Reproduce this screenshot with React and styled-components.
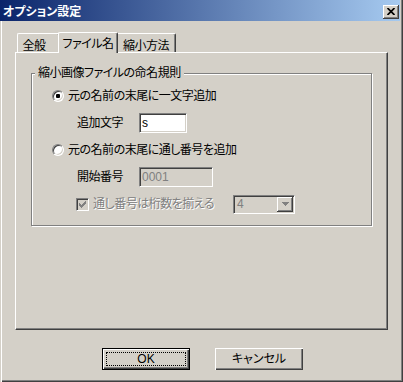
import styled, { createGlobalStyle } from "styled-components";

const GlobalStyle = createGlobalStyle`
  html, body {
    margin: 0;
    padding: 0;
    background: #d4d0c8;
  }
  body {
    font-family: "Liberation Sans", "Noto Sans CJK JP", sans-serif;
    font-size: 12px;
    font-feature-settings: "palt";
    letter-spacing: -0.5px;
    color: #000;
  }
`;

const Window = styled.div`
  width: 403px;
  height: 382px;
  box-sizing: border-box;
  display: flex;
  flex-direction: column;
  background: #d4d0c8;
  box-shadow: inset 1px 0 #d4d0c8, inset 2px 0 #fff, inset -1px -1px #404040,
    inset -2px -2px #808080;
`;

const TitleBar = styled.div`
  height: 21px;
  margin-right: 3px;
  box-sizing: border-box;
  padding: 5px 1px 0 3px;
  display: flex;
  align-items: flex-start;
  justify-content: space-between;
  background: linear-gradient(to right, #0a246a, #a6caf0);
`;

const Title = styled.span`
  color: #fff;
  font-weight: bold;
  line-height: 14px;
  letter-spacing: 0;
`;

const CloseButton = styled.div`
  width: 16px;
  height: 14px;
  box-sizing: border-box;
  display: flex;
  align-items: center;
  justify-content: center;
  background: #d4d0c8;
  box-shadow: inset -1px -1px #404040, inset 1px 1px #fff, inset -2px -2px #808080;
  svg {
    margin-top: -1px;
  }
`;

const Body = styled.div`
  flex: 1;
  padding: 11px 15px 0;
  display: flex;
  flex-direction: column;
`;

const TabStrip = styled.div`
  display: flex;
  align-items: flex-end;
  height: 20px;
  padding-left: 2px;
  position: relative;
  z-index: 1;
`;

const Tab = styled.div`
  width: ${(p) => p.$w}px;
  height: ${(p) => (p.$active ? 21 : 19)}px;
  margin: 0 ${(p) => (p.$active ? -2 : 0)}px ${(p) => (p.$active ? -1 : 0)}px;
  padding: ${(p) => (p.$active ? 4 : 5)}px ${(p) => p.$pr || 0}px 0 0;
  box-sizing: border-box;
  position: relative;
  z-index: ${(p) => (p.$active ? 2 : 1)};
  display: flex;
  justify-content: center;
  align-items: flex-start;
  line-height: 14px;
  white-space: nowrap;
  background: #d4d0c8;
  border-top: 1px solid #fff;
  border-left: 1px solid #fff;
  border-right: 1px solid #404040;
  border-radius: 2px 2px 0 0;
  box-shadow: inset -1px 0 #808080;
`;

const Panel = styled.div`
  height: 278px;
  box-sizing: border-box;
  border-top: 1px solid #fff;
  border-left: 1px solid #fff;
  border-right: 1px solid #404040;
  border-bottom: 1px solid #404040;
  box-shadow: inset -1px -1px #808080;
  display: flex;
  flex-direction: column;
`;

const Group = styled.fieldset`
  margin: 13px 15px 0 15px;
  padding: 6px 0 11px 3px;
  min-width: 0;
  border: 1px solid #808080;
  box-shadow: 1px 1px 0 #fff, inset 1px 1px 0 #fff;
`;

const Legend = styled.legend`
  padding: 0 3px;
  margin: 0;
  line-height: 14px;
  background: #d4d0c8;
`;

const Row = styled.div`
  display: flex;
  align-items: center;
  height: 20px;
  padding-left: ${(p) => p.$indent}px;
  margin-bottom: ${(p) => (p.$last ? 0 : 7)}px;
  line-height: 14px;
  white-space: nowrap;
`;

const Radio = styled.span`
  position: relative;
  width: 12px;
  height: 12px;
  box-sizing: border-box;
  border-radius: 50%;
  background: #fff;
  border: 1px solid;
  border-color: #808080 #fff #fff #808080;
  box-shadow: inset 1px 1px #404040, inset -1px -1px #d4d0c8;
  margin-right: 4px;
  flex: none;

  &::after {
    content: "";
    display: ${(p) => (p.$checked ? "block" : "none")};
    position: absolute;
    left: 3px;
    top: 3px;
    width: 4px;
    height: 4px;
    border-radius: 1px;
    background: #000;
  }
`;

const FieldLabel = styled.span`
  width: 62px;
  flex: none;
`;

const TextBox = styled.input`
  width: ${(p) => p.$w}px;
  height: 20px;
  box-sizing: border-box;
  margin: 0;
  padding: 0 2px;
  font: inherit;
  font-family: "Liberation Sans", sans-serif;
  letter-spacing: 0;
  color: ${(p) => (p.disabled ? "#808080" : "#000")};
  background: ${(p) => (p.disabled ? "#d4d0c8" : "#fff")};
  border: 1px solid;
  border-color: #808080 #fff #fff #808080;
  box-shadow: inset 1px 1px #404040, inset -1px -1px #d4d0c8;
  outline: none;
`;

const CheckBox = styled.span`
  width: 13px;
  height: 13px;
  box-sizing: border-box;
  flex: none;
  display: flex;
  align-items: center;
  justify-content: center;
  margin-right: 4px;
  background: #d4d0c8;
  border: 1px solid;
  border-color: #808080 #fff #fff #808080;
  box-shadow: inset 1px 1px #404040, inset -1px -1px #d4d0c8;
`;

const DisabledText = styled.span`
  color: #808080;
  text-shadow: 1px 1px 0 #fff;
  width: 140px;
  flex: none;
`;

const Combo = styled.div`
  width: 62px;
  height: 19px;
  box-sizing: border-box;
  display: flex;
  align-items: center;
  justify-content: space-between;
  padding: 0 0 0 3px;
  background: #d4d0c8;
  border: 1px solid;
  border-color: #808080 #fff #fff #808080;
  box-shadow: inset 1px 1px #404040, inset -1px -1px #d4d0c8;
  color: #808080;
  font-family: "Liberation Sans", sans-serif;
`;

const DropButton = styled.span`
  width: 16px;
  height: 15px;
  margin-right: 1px;
  box-sizing: border-box;
  display: flex;
  align-items: center;
  justify-content: center;
  box-shadow: inset -1px -1px #404040, inset 1px 1px #fff, inset -2px -2px #808080;
`;

const ButtonRow = styled.div`
  display: flex;
  justify-content: center;
  gap: 25px;
  margin-top: 18px;
  padding-left: 2px;
`;

const PushButton = styled.button`
  width: 88px;
  height: 22px;
  box-sizing: border-box;
  margin: 0;
  padding: 3px;
  font: inherit;
  color: #000;
  background: #d4d0c8;
  border: ${(p) => (p.$default ? "1px solid #000" : "none")};
  box-shadow: inset 1px 1px #fff, inset -1px -1px #404040, inset -2px -2px #808080;
  display: flex;
  align-items: stretch;
`;

const FocusFrame = styled.span`
  flex: 1;
  display: flex;
  align-items: center;
  justify-content: center;
  line-height: 14px;
  border: 1px ${(p) => (p.$focused ? "dotted #000" : "solid transparent")};
`;

const CloseGlyph = () => (
  <svg width="8" height="7" viewBox="0 0 8 7">
    <path d="M0.5 0 L7.5 7 M7.5 0 L0.5 7" stroke="#000" strokeWidth="1.7" />
  </svg>
);

const CheckGlyph = () => (
  <svg width="7" height="7" viewBox="0 0 7 7">
    <path
      d="M6 0H7V3H6V4H5V5H4V6H3V7H2V6H1V5H0V2H1V3H2V4H3V3H4V2H5V1H6Z"
      fill="#808080"
    />
  </svg>
);

const ArrowGlyph = () => (
  <svg width="7" height="4" viewBox="0 0 7 4">
    <path d="M0 0H7V1H6V2H5V3H4V4H3V3H2V2H1V1H0Z" fill="#808080" />
  </svg>
);

export default function App() {
  return (
    <>
      <GlobalStyle />
      <Window>
        <TitleBar>
          <Title>オプション設定</Title>
          <CloseButton>
            <CloseGlyph />
          </CloseButton>
        </TitleBar>
        <Body>
          <TabStrip>
            <Tab $w={43} $pr={9}>
              全般
            </Tab>
            <Tab $w={60} $active>
              ファイル名
            </Tab>
            <Tab $w={60}>縮小方法</Tab>
          </TabStrip>
          <Panel>
            <Group>
              <Legend>縮小画像ファイルの命名規則</Legend>
              <Row $indent={17}>
                <Radio $checked />
                <span>元の名前の末尾に一文字追加</span>
              </Row>
              <Row $indent={42}>
                <FieldLabel>追加文字</FieldLabel>
                <TextBox $w={48} value="s" readOnly />
              </Row>
              <Row $indent={17}>
                <Radio />
                <span>元の名前の末尾に通し番号を追加</span>
              </Row>
              <Row $indent={42}>
                <FieldLabel>開始番号</FieldLabel>
                <TextBox $w={74} value="0001" disabled readOnly />
              </Row>
              <Row $indent={41} $last>
                <CheckBox>
                  <CheckGlyph />
                </CheckBox>
                <DisabledText>通し番号は桁数を揃える</DisabledText>
                <Combo>
                  <span>4</span>
                  <DropButton>
                    <ArrowGlyph />
                  </DropButton>
                </Combo>
              </Row>
            </Group>
          </Panel>
          <ButtonRow>
            <PushButton $default>
              <FocusFrame $focused>OK</FocusFrame>
            </PushButton>
            <PushButton>
              <FocusFrame>キャンセル</FocusFrame>
            </PushButton>
          </ButtonRow>
        </Body>
      </Window>
    </>
  );
}
